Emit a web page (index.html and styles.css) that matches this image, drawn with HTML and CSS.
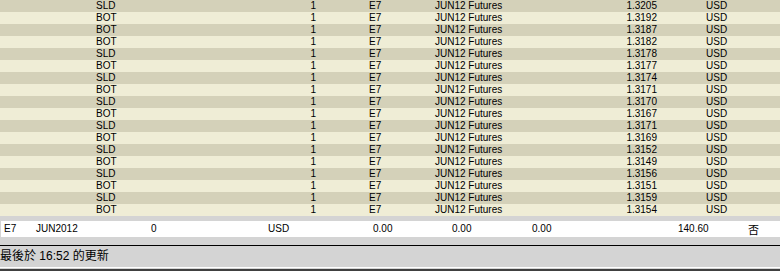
FILE: index.html
```html
<!DOCTYPE html>
<html lang="zh-Hant">
<head>
<meta charset="utf-8">
<title>Trades</title>
<link rel="stylesheet" href="styles.css">
</head>
<body>
<div class="page">
  <div class="trades">
    <div class="row dark"><span class="side">SLD</span><span class="qty">1</span><span class="sym">E7</span><span class="desc">JUN12 Futures</span><span class="price">1.3205</span><span class="cur">USD</span></div>
    <div class="row light"><span class="side">BOT</span><span class="qty">1</span><span class="sym">E7</span><span class="desc">JUN12 Futures</span><span class="price">1.3192</span><span class="cur">USD</span></div>
    <div class="row dark"><span class="side">BOT</span><span class="qty">1</span><span class="sym">E7</span><span class="desc">JUN12 Futures</span><span class="price">1.3187</span><span class="cur">USD</span></div>
    <div class="row light"><span class="side">BOT</span><span class="qty">1</span><span class="sym">E7</span><span class="desc">JUN12 Futures</span><span class="price">1.3182</span><span class="cur">USD</span></div>
    <div class="row dark"><span class="side">SLD</span><span class="qty">1</span><span class="sym">E7</span><span class="desc">JUN12 Futures</span><span class="price">1.3178</span><span class="cur">USD</span></div>
    <div class="row light"><span class="side">BOT</span><span class="qty">1</span><span class="sym">E7</span><span class="desc">JUN12 Futures</span><span class="price">1.3177</span><span class="cur">USD</span></div>
    <div class="row dark"><span class="side">SLD</span><span class="qty">1</span><span class="sym">E7</span><span class="desc">JUN12 Futures</span><span class="price">1.3174</span><span class="cur">USD</span></div>
    <div class="row light"><span class="side">BOT</span><span class="qty">1</span><span class="sym">E7</span><span class="desc">JUN12 Futures</span><span class="price">1.3171</span><span class="cur">USD</span></div>
    <div class="row dark"><span class="side">SLD</span><span class="qty">1</span><span class="sym">E7</span><span class="desc">JUN12 Futures</span><span class="price">1.3170</span><span class="cur">USD</span></div>
    <div class="row light"><span class="side">BOT</span><span class="qty">1</span><span class="sym">E7</span><span class="desc">JUN12 Futures</span><span class="price">1.3167</span><span class="cur">USD</span></div>
    <div class="row dark"><span class="side">SLD</span><span class="qty">1</span><span class="sym">E7</span><span class="desc">JUN12 Futures</span><span class="price">1.3171</span><span class="cur">USD</span></div>
    <div class="row light"><span class="side">BOT</span><span class="qty">1</span><span class="sym">E7</span><span class="desc">JUN12 Futures</span><span class="price">1.3169</span><span class="cur">USD</span></div>
    <div class="row dark"><span class="side">SLD</span><span class="qty">1</span><span class="sym">E7</span><span class="desc">JUN12 Futures</span><span class="price">1.3152</span><span class="cur">USD</span></div>
    <div class="row light"><span class="side">BOT</span><span class="qty">1</span><span class="sym">E7</span><span class="desc">JUN12 Futures</span><span class="price">1.3149</span><span class="cur">USD</span></div>
    <div class="row dark"><span class="side">SLD</span><span class="qty">1</span><span class="sym">E7</span><span class="desc">JUN12 Futures</span><span class="price">1.3156</span><span class="cur">USD</span></div>
    <div class="row light"><span class="side">BOT</span><span class="qty">1</span><span class="sym">E7</span><span class="desc">JUN12 Futures</span><span class="price">1.3151</span><span class="cur">USD</span></div>
    <div class="row dark"><span class="side">SLD</span><span class="qty">1</span><span class="sym">E7</span><span class="desc">JUN12 Futures</span><span class="price">1.3159</span><span class="cur">USD</span></div>
    <div class="row light"><span class="side">BOT</span><span class="qty">1</span><span class="sym">E7</span><span class="desc">JUN12 Futures</span><span class="price">1.3154</span><span class="cur">USD</span></div>
  </div>
  <div class="summary">
    <span>E7</span>
    <span>JUN2012</span>
    <span>0</span>
    <span>USD</span>
    <span>0.00</span>
    <span>0.00</span>
    <span>0.00</span>
    <span>140.60</span>
    <span class="s-flag">否</span>
  </div>
  <div class="status">最後於 16:52 的更新</div>
  <div class="bottom-edge"></div>
</div>
</body>
</html>
```
FILE: styles.css
```css
html, body {
  margin: 0;
  padding: 0;
}
body {
  background: #d4d4d4;
  font-family: "Liberation Sans", Arial, "Noto Sans CJK TC", sans-serif;
  color: #000;
  width: 780px;
  height: 271px;
  overflow: hidden;
}
.page {
  display: flex;
  flex-direction: column;
}
.trades {
  display: flex;
  flex-direction: column;
}
.row {
  display: grid;
  grid-template-columns: 96px 160px 60px 53px 66px 142px 80px 49px 1fr;
  height: 12px;
  line-height: 12px;
  font-size: 10px;
  white-space: nowrap;
}
.dark { background: #d4d1b9; }
.light { background: #efedd6; }
.side { grid-column: 2; }
.qty { grid-column: 3; text-align: right; }
.sym { grid-column: 5; }
.desc { grid-column: 6; }
.price { grid-column: 7; text-align: right; }
.cur { grid-column: 9; }

.summary {
  margin: 5px 0 0 1px;
  padding-left: 3px;
  height: 16px;
  line-height: 16px;
  background: #fff;
  font-size: 10px;
  display: grid;
  grid-template-columns: 32px 115px 117px 105px 79px 80px 146px 70px 1fr;
  white-space: nowrap;
}
.s-flag {
  font-family: "Noto Sans CJK KR", "Noto Sans CJK TC", sans-serif;
  font-size: 11px;
}

.status {
  margin-top: 8px;
  border-top: 1px solid #000;
  height: 21px;
  line-height: 21px;
  font-size: 12px;
  white-space: nowrap;
  border-bottom: 1px solid #fff;
}
.bottom-edge {
  height: 3px;
  border-top: 1px solid #d4d4d4;
  background: #404040;
  box-sizing: border-box;
}
```
